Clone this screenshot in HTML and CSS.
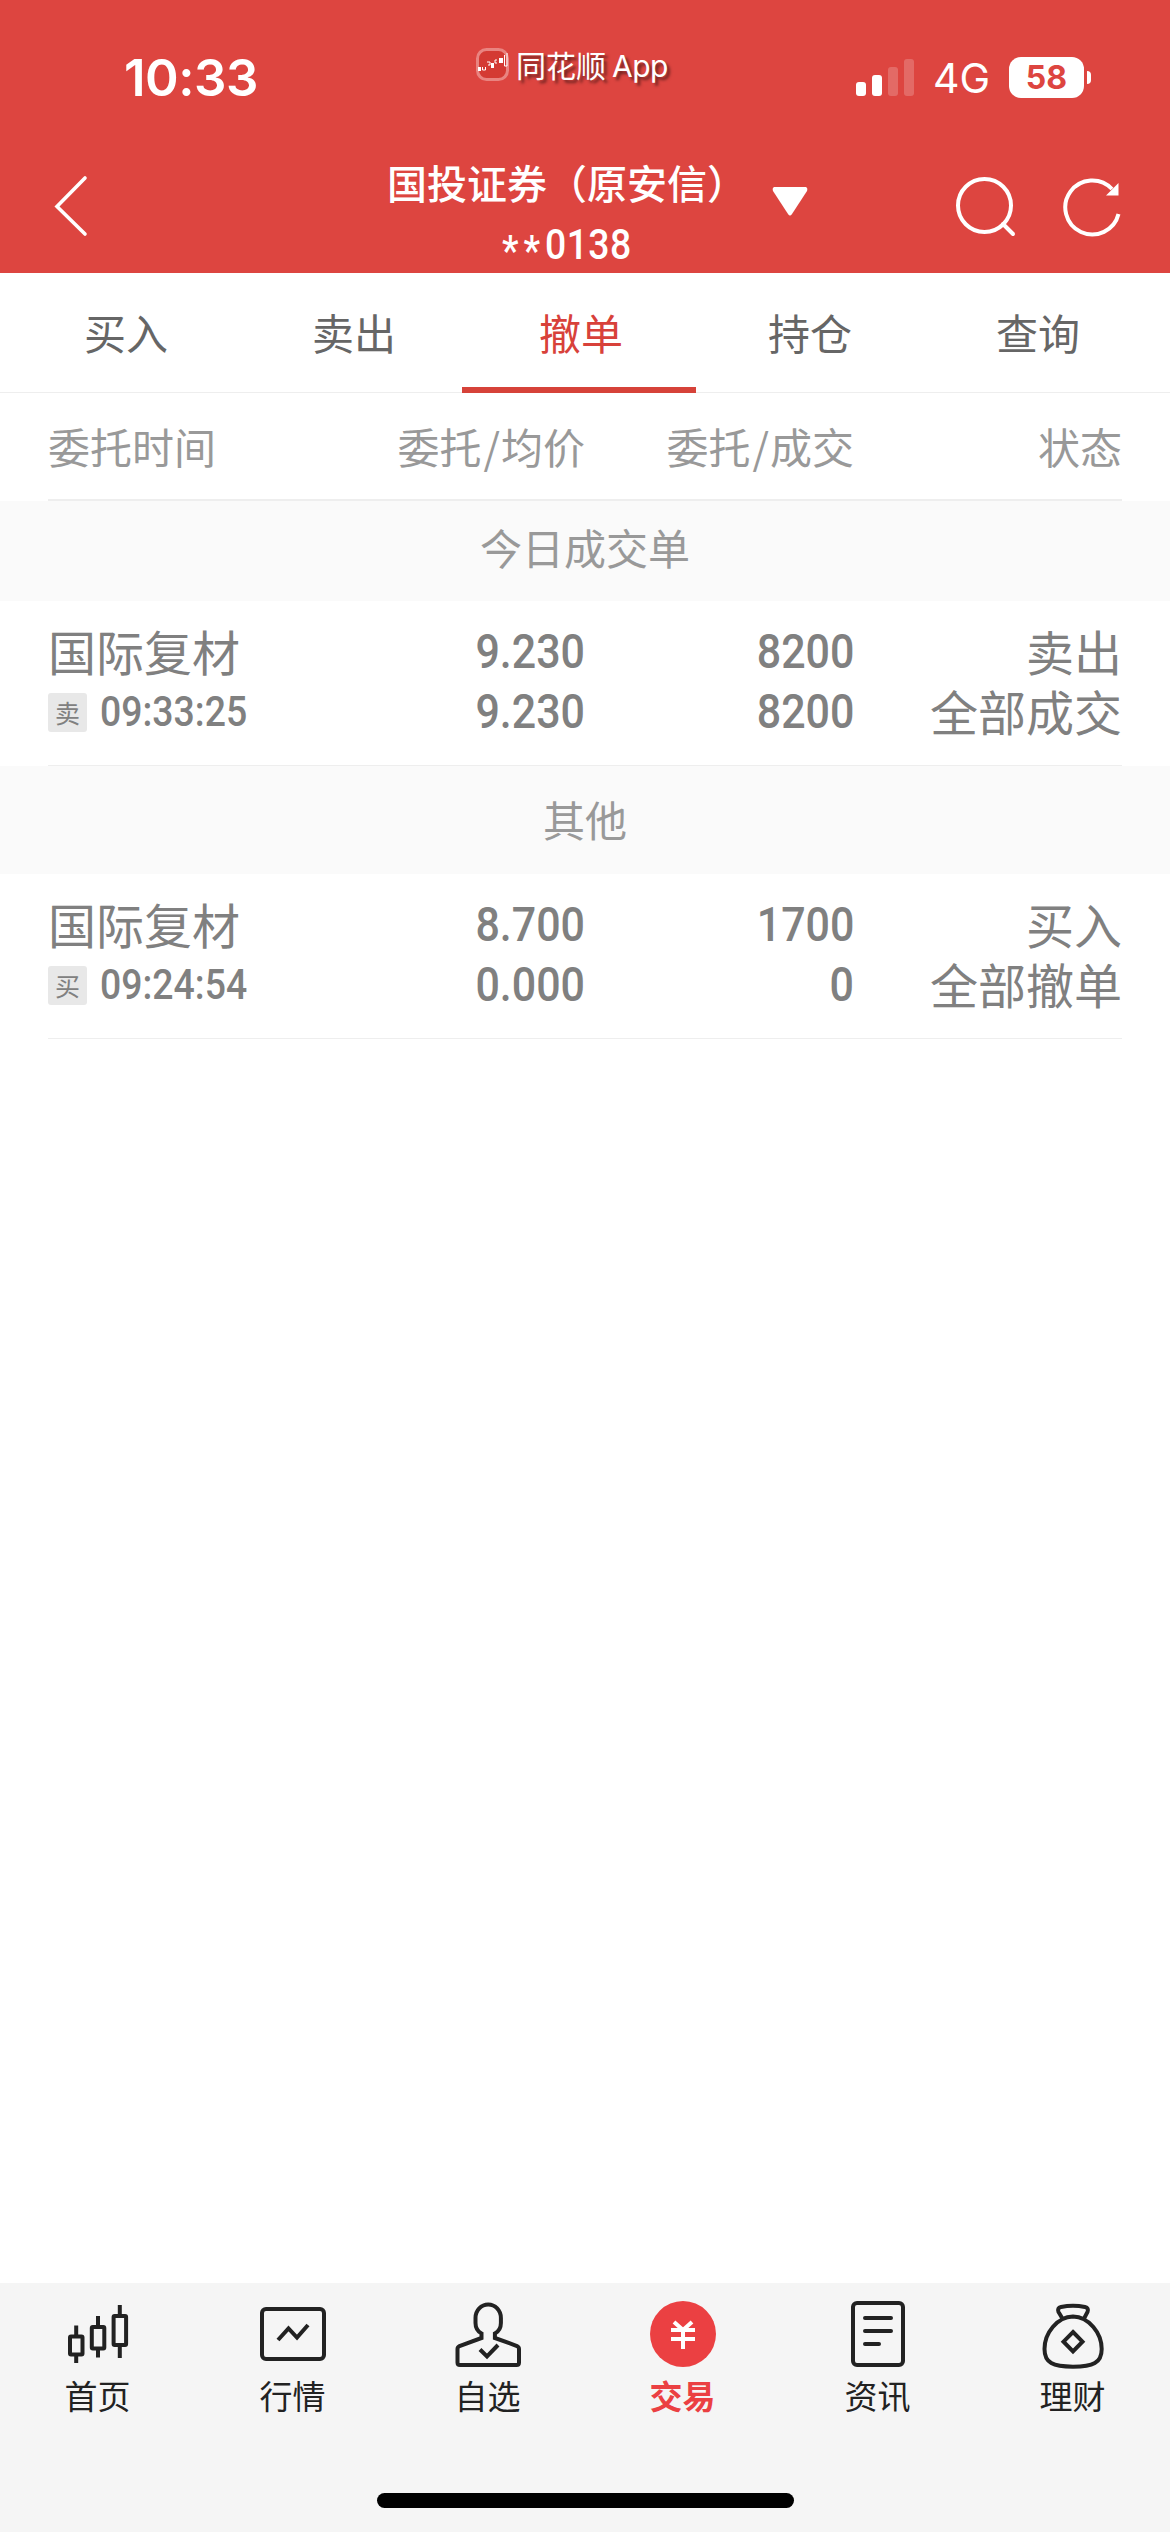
FILE: index.html
```html
<!DOCTYPE html>
<html lang="zh-CN">
<head>
    <meta charset="UTF-8" />
    <title>撤单</title>
    <link rel="stylesheet" href="styles.css">
</head>
<body>
<header class="header">
    <div class="status-bar">
        <span class="clock">10:33</span>
        <div class="app-name">
            <svg class="app-logo" width="34" height="34" viewBox="0 0 34 34">
                <rect x="1.5" y="1.5" width="30" height="30" rx="9" fill="#d43a33" stroke="#e98480" stroke-width="3" />
                <path d="M2 19h3v4H2zM15 15h3v5h-3zM23 10h4v5h-4z" fill="#fff" />
                <path d="M6.500 19v3h3v-3M11 14h3v3h-2M21 12h-2v3h2M28.500 7v11h2.500v-13" fill="none" stroke="#fff" />
            </svg>
            <span class="app-text">同花顺<span class="app-latin">App</span></span>
        </div>
        <div class="status-right">
            <svg width="58" height="38" viewBox="0 0 58 38" fill="#fff">
                <rect x="0" y="23" width="10" height="14" rx="3" />
                <rect x="16" y="16" width="10" height="21" rx="3" />
                <rect x="32" y="8" width="10" height="29" rx="3" opacity=".2" />
                <rect x="48" y="0" width="10" height="37" rx="3" opacity=".2" />
            </svg>
            <span class="network">4G</span>
            <span class="battery">58</span>
            <span class="battery-cap"></span>
        </div>
    </div>
    <div class="nav">
        <svg class="back" width="34" height="62" viewBox="0 0 34 62">
            <path d="M31 3 3 31.500 31 59" fill="none" stroke="#fff" stroke-width="3.600" stroke-linecap="round" />
        </svg>
        <div class="account">
            <div class="broker">国投证券（原安信）</div>
            <div class="account-no"><span class="num num-account"><span class="mask">**</span>0138</span></div>
        </div>
        <svg class="dropdown" width="38" height="32" viewBox="0 0 38 32">
            <path d="M3 2h32q2 1 1 4L21 29q-2 3-4 0L2 6Q1 3 3 2z" fill="#fff" />
        </svg>
        <svg class="search" width="62" height="62" viewBox="0 0 62 62" fill="none" stroke="#fff" stroke-width="4">
            <circle cx="30.500" cy="30.500" r="26.500" />
            <path d="M49 49 59 59" stroke-linecap="round" />
        </svg>
        <svg class="refresh" width="62" height="62" viewBox="0 0 62 62">
            <path d="M50 14A27 27 0 1 0 56.500 39" fill="none" stroke="#fff" stroke-width="4" />
            <path d="M56.500 8v12.500H44z" fill="#fff" />
        </svg>
    </div>
</header>

<nav class="tabs">
    <a class="tab">买入</a>
    <a class="tab">卖出</a>
    <a class="tab active">撤单</a>
    <a class="tab">持仓</a>
    <a class="tab">查询</a>
</nav>

<main>
    <div class="row columns">
        <span>委托时间</span>
        <span>委托<span class="slash">/</span>均价</span>
        <span>委托<span class="slash">/</span>成交</span>
        <span>状态</span>
    </div>

    <div class="section">今日成交单</div>
    <div class="row order">
        <div>
            <div class="line">国际复材</div>
            <div class="line time"><span class="side">卖</span><span class="num num-time">09:33:25</span></div>
        </div>
        <div class="figures">
            <span class="num">9.230</span>
            <span class="num">9.230</span>
        </div>
        <div class="figures">
            <span class="num">8200</span>
            <span class="num">8200</span>
        </div>
        <div>
            <div class="line">卖出</div>
            <div class="line">全部成交</div>
        </div>
    </div>

    <div class="section section-other">其他</div>
    <div class="row order">
        <div>
            <div class="line">国际复材</div>
            <div class="line time"><span class="side">买</span><span class="num num-time">09:24:54</span></div>
        </div>
        <div class="figures">
            <span class="num">8.700</span>
            <span class="num">0.000</span>
        </div>
        <div class="figures">
            <span class="num">1700</span>
            <span class="num">0</span>
        </div>
        <div>
            <div class="line">买入</div>
            <div class="line">全部撤单</div>
        </div>
    </div>
</main>

<footer class="footer">
    <div class="menu">
        <a class="menu-item">
            <svg class="icon" viewBox="0 0 195 80">
                <rect x="70" y="43.500" width="12.500" height="18" rx="1" />
                <path d="M76.200 32.500v11M76.200 61.500V70" />
                <rect x="91.800" y="34" width="12.500" height="21.500" rx="1" />
                <path d="M98 23v11M98 55.500v9" />
                <rect x="113.600" y="23" width="12.500" height="29" rx="1" />
                <path d="M119.800 12v11M119.800 52v13" />
            </svg>
            <span>首页</span>
        </a>
        <a class="menu-item">
            <svg class="icon" viewBox="0 0 195 80">
                <rect x="67" y="16" width="62" height="50" rx="4" />
                <path d="M83 47 93.500 35.500 102 44.500 113 32" />
            </svg>
            <span>行情</span>
        </a>
        <a class="menu-item">
            <svg class="icon" viewBox="0 0 195 80">
                <path d="M91.500 45V40.500C87 38 85.500 35 85.500 30V25a12.700 13.500 0 0 1 25.400 0v5c0 5-1.500 8-6 10.500V45L127 53q2 1 2 3V69.500q0 2.500-2.500 2.500H70q-2.500 0-2.500-2.500V56q0-2 2-3z" />
                <path d="M90 56.500 97 63.500 108 52" />
            </svg>
            <span>自选</span>
        </a>
        <a class="menu-item current">
            <svg class="icon" viewBox="0 0 195 80">
                <circle class="disc" cx="98" cy="41" r="33" />
                <path class="yuan" d="M89 29 98 37 107 29M86 37h24M86 46h24M98 37v19" />
            </svg>
            <span>交易</span>
        </a>
        <a class="menu-item">
            <svg class="icon" viewBox="0 0 195 80">
                <rect x="73" y="10" width="50" height="62" rx="4" />
                <path d="M85 25h26M85 38h26M85 51h14" stroke-linecap="round" />
            </svg>
            <span>资讯</span>
        </a>
        <a class="menu-item">
            <svg class="icon" viewBox="0 0 195 80">
                <path d="M98 23.500C82 24 69.500 40 69.500 56 69.500 70 78 73.700 98 73.700S126.700 70 126.700 56C126.700 40 114 24 98 23.500z" />
                <path d="M88 26.500 83.500 19Q82 15 86 14 98 11.500 110 14 114 15 112.500 19L108.500 26.500" />
                <path d="M98 39 107.500 48.700 98 58.500 88.500 48.700z" />
            </svg>
            <span>理财</span>
        </a>
    </div>
    <div class="home-bar"></div>
</footer>
</body>
</html>
```

FILE: styles.css
```css
* {
  box-sizing: border-box;
}
body {
  margin: 0;
  width: 1170px;
  height: 2532px;
  display: flex;
  flex-direction: column;
  background: #fff;
  color: #808080;
  font-family: "Noto Sans CJK SC", sans-serif;
  overflow: hidden;
}
svg {
  display: block;
  flex: none;
}

/* header */
.header {
  height: 273px;
  background: #dd4540;
  color: #fff;
}
.status-bar {
  height: 155px;
  display: flex;
  align-items: flex-start;
  font-family: Inter, "Noto Sans CJK SC", sans-serif;
}
.clock {
  width: 352px;
  margin-left: 124px;
  padding-top: 47px;
  font-size: 51px;
  font-weight: 600;
  letter-spacing: -0.5px;
  line-height: 62px;
}
.app-name {
  width: 380px;
  display: flex;
  gap: 6px;
  padding-top: 48px;
}
.app-text {
  font-size: 30px;
  line-height: 36px;
  text-shadow: 3px 3px 3px rgba(0, 0, 0, 0.5);
}
.app-latin {
  margin-left: 6px;
  letter-spacing: -0.5px;
}
.status-right {
  display: flex;
  align-items: center;
  padding-top: 57px;
  height: 98px;
}
.network {
  width: 76px;
  margin-left: 19px;
  font-size: 41px;
  line-height: 42px;
}
.battery {
  width: 75px;
  height: 41px;
  border-radius: 12px;
  background: #fff;
  color: #dd4540;
  font-size: 32px;
  font-weight: 700;
  line-height: 41px;
  text-align: center;
}
.battery-cap {
  width: 4px;
  height: 13px;
  margin-left: 3px;
  border-radius: 0 4px 4px 0;
  background: #fff;
}
.nav {
  height: 118px;
  display: flex;
}
.back {
  margin: 20px 0 0 54px;
}
.account {
  width: 360px;
  margin-left: 299px;
  text-align: center;
}
.broker {
  height: 58px;
  font-size: 40px;
  font-weight: 500;
  line-height: 54px;
  white-space: nowrap;
}
.account-no {
  height: 60px;
  padding-top: 2px;
  line-height: 60px;
}
.dropdown {
  margin: 30px 0 0 24px;
}
.search {
  margin: 20px 0 0 145px;
}
.refresh {
  margin: 20px 0 0 46px;
}

/* narrow digits */
.num {
  display: inline-block;
  font-family: Roboto, sans-serif;
  font-size: 49px;
  font-weight: 500;
  line-height: 60px;
  transform: scaleX(0.877);
  transform-origin: right;
}
.num-account {
  font-size: 42px;
  letter-spacing: 0.5px;
  transform: scaleX(0.89);
  transform-origin: center;
}
.mask {
  letter-spacing: 5.5px;
  line-height: 1;
  vertical-align: -6px;
}
.num-time {
  font-size: 42px;
  transform: scaleX(0.89);
  transform-origin: left;
}

/* tabs */
.tabs {
  height: 120px;
  display: flex;
  padding: 0 18px 0 12px;
  border-bottom: 1px solid #eee;
}
.tab {
  flex: 1;
  height: 120px;
  color: #666;
  font-size: 42px;
  line-height: 118px;
  text-align: center;
}
.tab.active {
  flex: 0 0 234px;
  margin: 0 0 0 -6px;
  padding-left: 4px;
  border-bottom: 6px solid #d64239;
  color: #d8413a;
}

/* order list */
.row {
  display: grid;
  grid-template-columns: 237px 300px 269px 268px;
  margin: 0 48px;
  border-bottom: 1px solid #eee;
  text-align: right;
}
.row > :first-child {
  text-align: left;
}
.columns {
  height: 108px;
  border-bottom-width: 2px;
  color: #999;
  font-size: 42px;
  line-height: 106px;
}
.slash {
  margin: 0 1px 0 2px;
}
.section {
  height: 100px;
  background: #fafafa;
  color: #999;
  font-size: 42px;
  line-height: 92px;
  text-align: center;
}
.section-other {
  height: 108px;
  line-height: 106px;
}
.order {
  height: 165px;
  padding-top: 20px;
}
.line {
  height: 60px;
  font-size: 48px;
  line-height: 58px;
}
.figures {
  display: flex;
  flex-direction: column;
  align-items: flex-end;
  padding-top: 1px;
}
.time {
  display: flex;
  align-items: center;
  padding-top: 1px;
}
.side {
  width: 39px;
  height: 39px;
  margin: 1px 13px 0 0;
  border-radius: 3px;
  background: #e8e8e8;
  font-size: 25px;
  line-height: 38px;
  text-align: center;
}

/* bottom menu */
.footer {
  height: 249px;
  margin-top: auto;
  padding-top: 10px;
  background: #f5f5f5;
}
.menu {
  height: 200px;
  display: flex;
}
.menu-item {
  width: 195px;
  color: #222;
  font-size: 33px;
  line-height: 44px;
  text-align: center;
}
.menu-item.current {
  color: #eb4042;
  font-weight: 700;
}
.icon {
  width: 195px;
  height: 80px;
  fill: none;
  stroke: #222;
  stroke-width: 4;
}
.disc {
  fill: #eb4042;
  stroke: none;
}
.yuan {
  stroke: #fff;
}
.home-bar {
  width: 417px;
  height: 15px;
  margin: 0 auto;
  border-radius: 8px;
  background: #000;
}
```
